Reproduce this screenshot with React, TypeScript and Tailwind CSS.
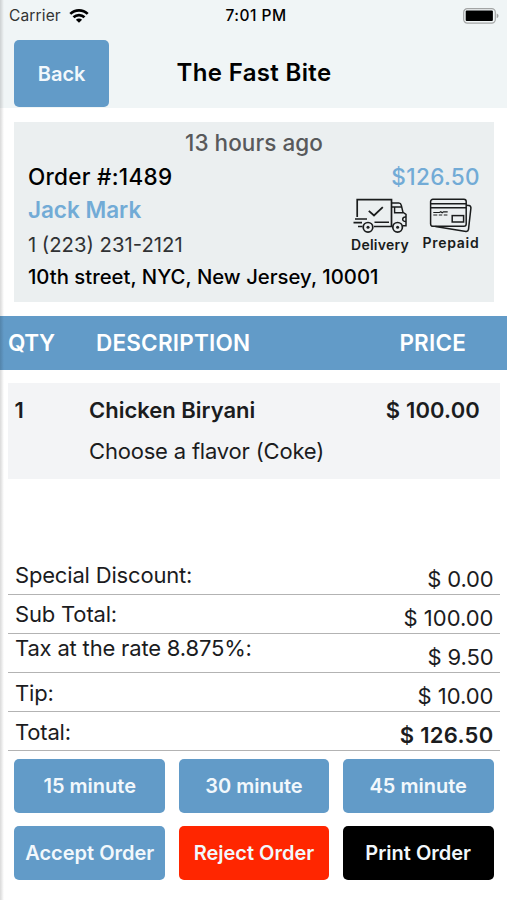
import React from "react";

const totals = [
  { label: "Special Discount:", value: "$ 0.00", pad: "pt-[4px]", font: "tracking-[-0.15px]" },
  { label: "Sub Total:", value: "$ 100.00", pad: "pt-[4px]", font: "" },
  { label: "Tax at the rate 8.875%:", value: "$ 9.50", pad: "pt-0 leading-[29px]", font: "tracking-[-0.1px]" },
  { label: "Tip:", value: "$ 10.00", pad: "pt-[5px]", font: "" },
  { label: "Total:", value: "$ 126.50", pad: "pt-[5px]", font: "font-semibold tracking-[0.3px]" },
];

const actions = [
  { label: "15 minute", color: "bg-[#629bc8]" },
  { label: "30 minute", color: "bg-[#629bc8]" },
  { label: "45 minute", color: "bg-[#629bc8]" },
  { label: "Accept Order", color: "bg-[#629bc8]" },
  { label: "Reject Order", color: "bg-[#ff2600]" },
  { label: "Print Order", color: "bg-black" },
];

function WifiIcon() {
  return (
    <svg width="20" height="14" viewBox="0 0 20 14" fill="none" stroke="#000" strokeWidth="2.7">
      <path d="M1.3 4.9C6.2.2 13.8.2 18.7 4.9" />
      <path d="M4.5 8.3c3.1-2.9 7.9-2.9 11 0" />
      <path d="M10 13.8 6.9 10.8c1.8-1.6 4.4-1.6 6.2 0z" fill="#000" stroke="none" />
    </svg>
  );
}

function BatteryIcon() {
  return (
    <svg width="37" height="16" viewBox="0 0 37 16">
      <rect x="0.7" y="0.7" width="31.6" height="14.4" rx="3.6" fill="none" stroke="#a3a5a5" strokeWidth="1.2" />
      <rect x="2.7" y="2.6" width="27.2" height="10.4" rx="1" fill="#000" />
      <path d="M33.7 5.6c2.4.8 2.4 3.8 0 4.6z" fill="#a3a5a5" />
    </svg>
  );
}

function TruckIcon() {
  return (
    <svg width="56" height="37" viewBox="0 0 56 37" fill="none" stroke="#1a1c1c" strokeWidth="1.5">
      <path d="M5.2 19V1.6h34.3v26.8" strokeWidth="1.7" />
      <path d="M16.8 12.8l5.2 4.7 8.8-8.3" strokeWidth="1.8" />
      <path d="M39.5 5h7.3c1.5 0 2.1.6 2.4 2l1.8 7.4 3 1.9v11.5h-3" />
      <path d="M39.5 9h9.6M42.6 9v5.8h8.4" strokeWidth="1.4" />
      <path d="M54 19c-3.8-.4-5 4.3 0 4.6" />
      <path d="M3 21h12M1.5 24.6h8.5M22.5 24.2h14.5" strokeWidth="1.6" />
      <path d="M22 28.4h18.5M6 28.4h4.5" strokeWidth="1.5" />
      <circle cx="16" cy="29.3" r="4.8" strokeWidth="1.7" />
      <circle cx="45.6" cy="29.3" r="4.8" strokeWidth="1.7" />
      <circle cx="16" cy="29.3" r="1.5" fill="#1a1c1c" stroke="none" />
      <circle cx="45.6" cy="29.3" r="1.5" fill="#1a1c1c" stroke="none" />
    </svg>
  );
}

function CardsIcon() {
  return (
    <svg width="45" height="36" viewBox="0 0 45 36" fill="none" stroke="#1a1c1c" strokeWidth="1.5">
      <rect x="1.6" y="1.3" width="35.6" height="27" rx="2.3" />
      <path d="M1.6 5.8h35.6M1.6 9.8h35.6" />
      <path d="M37.2 7.2l2.7.4c1.4.2 2.2 1.1 2 2.5l-2.4 21.3c-.2 1.4-1.1 2.1-2.5 2L6.4 28.4" />
      <rect x="23.2" y="17.6" width="11.4" height="6.4" />
      <path d="M4.3 14.5h6.2l1.3-.8 1.4 1.1 1.3-.9h4.2M4.3 17h4M9.8 17h3.4M14.8 17h3.6" strokeWidth="1.1" />
    </svg>
  );
}

export default function App() {
  return (
    <div className="relative flex h-[900px] w-[507px] flex-col overflow-hidden bg-white font-['Inter',sans-serif] text-[#1b1c1e]">
      <header className="h-[108.4px] shrink-0 bg-[#f0f5f6]">
        <div className="grid h-[30px] grid-cols-3 items-center pt-px pr-[7px] pl-[9px] text-[15.5px]">
          <div className="flex items-center gap-[8px]">
            <span className="tracking-[0.15px] text-[#333]">Carrier</span>
            <WifiIcon />
          </div>
          <span className="pl-[3px] text-center font-medium tracking-[0.5px] text-black">7:01 PM</span>
          <div className="flex justify-end"><BatteryIcon /></div>
        </div>
        <div className="grid h-[86px] grid-cols-[94.5px_1fr_94.5px] items-center px-[14.4px]">
          <button className="h-[67px] rounded-[5px] bg-[#629bc8] pt-px text-[20px] font-semibold text-[#f2f8fc]">Back</button>
          <h1 className="pl-px text-center text-[24px] font-semibold tracking-[0.35px] text-black">The Fast Bite</h1>
        </div>
      </header>

      <section className="mr-[13.5px] ml-[14.4px] mt-[14px] h-[179.6px] shrink-0 bg-[#ebeff0] px-[13.5px] pt-[3.4px]">
        <p className="text-center text-[22.5px] leading-[34px] font-medium tracking-[0.05px] text-[#58595b]">13 hours ago</p>
        <div className="flex justify-between text-[22.5px] leading-[33.6px] font-medium text-black">
          <span className="tracking-[0.3px]">Order #:1489</span>
          <span className="tracking-[0.35px] text-[#72abd6]">$126.50</span>
        </div>
        <div className="flex h-[68px] justify-between">
          <div>
            <p className="text-[22.5px] leading-[34px] font-semibold text-[#72abd6]">Jack Mark</p>
            <p className="text-[20.3px] leading-[35px] text-[#303234]">1 (223) 231-2121</p>
          </div>
          <div className="flex gap-[13px] pt-[5px] text-[14px] leading-[16px] font-semibold text-[#1a1c1c]">
            <div className="flex w-[58px] flex-col items-center">
              <TruckIcon />
              <span className="mt-[2px] tracking-[0.25px]">Delivery</span>
            </div>
            <div className="flex w-[58px] flex-col items-center">
              <CardsIcon />
              <span className="mt-px tracking-[0.7px]">Prepaid</span>
            </div>
          </div>
        </div>
        <p className="text-[20.3px] leading-[32px] font-medium tracking-[0.02px] text-black">10th street, NYC, New Jersey, 10001</p>
      </section>

      <div className="mt-[14px] grid h-[53.7px] shrink-0 grid-cols-[88px_1fr_auto] items-center bg-[#629bc8] pt-px pr-[41px] pl-[8px] text-[22.5px] font-semibold text-white">
        <span className="tracking-[-0.4px]">QTY</span>
        <span className="tracking-[0.2px]">DESCRIPTION</span>
        <span className="tracking-[0.2px]">PRICE</span>
      </div>

      <section className="mr-[7px] ml-[8px] mt-[13px] grid h-[96px] shrink-0 grid-cols-[74.5px_1fr_auto] bg-[#f3f4f6] pt-[7px] pr-[20px] pl-[6.5px] text-[22px] leading-[41px] font-semibold">
        <span>1</span>
        <div>
          <p>Chicken Biryani</p>
          <p className="font-normal tracking-[-0.19px]">Choose a flavor (Coke)</p>
        </div>
        <span className="tracking-[0.15px]">$ 100.00</span>
      </section>

      <section className="mr-[7px] ml-[8px] mt-[77px] shrink-0 text-[22px] leading-[30px]">
        {totals.map((row) => (
          <div key={row.label} className={"flex h-[39.1px] justify-between border-b-[1.5px] border-[#b3b3b3] pr-[6.5px] pl-[7px] " + row.pad}>
            <span className="tracking-[-0.18px]">{row.label}</span>
            <span className={"self-end leading-[30px] " + row.font}>{row.value}</span>
          </div>
        ))}
      </section>

      <section className="mt-[7.5px] grid shrink-0 grid-cols-3 gap-[13.5px] pr-[13.5px] pl-[14.4px] text-[20px] font-semibold text-[#f2f8fc]">
        {actions.map((a) => (
          <button key={a.label} className={"h-[54px] rounded-[5px] whitespace-nowrap " + a.color}>{a.label}</button>
        ))}
      </section>

      <div className="pointer-events-none absolute inset-y-0 left-0 w-[4px] bg-linear-to-r from-black/15 to-transparent" />
    </div>
  );
}
